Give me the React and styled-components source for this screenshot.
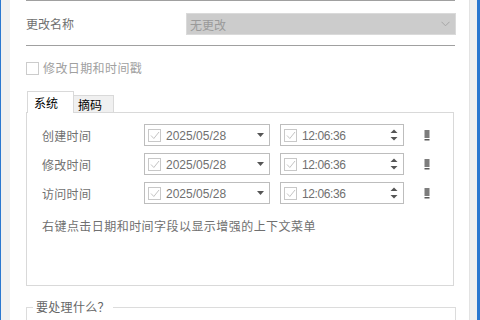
import React from "react";
import styled, { createGlobalStyle } from "styled-components";

const Global = createGlobalStyle`
  html, body { margin: 0; padding: 0; background: #ffffff; }
  body { font-family: "Noto Sans CJK SC", "Liberation Sans", sans-serif; font-size: 12px; }
  #root { width: 480px; height: 320px; overflow: hidden; }
`;

const Frame = styled.div`
  display: flex;
  width: 480px;
  height: 320px;
  overflow: hidden;
`;

const Edge = styled.div`
  flex: 0 0 ${(p) => p.$w}px;
  box-sizing: border-box;
  background: ${(p) => p.$c};
  border-left: ${(p) => (p.$bl ? `1px solid ${p.$bl}` : "none")};
`;

const Main = styled.div`
  flex: 1;
  background: #ffffff;
  padding: 0 13px 0 16px;
  display: flex;
  flex-direction: column;
  overflow: hidden;
`;

const Rule = styled.div`
  height: 1px;
  background: #a0a0a0;
  margin-top: ${(p) => p.$mt || 0}px;
  margin-right: 1px;
  flex-shrink: 0;
`;

const NameRow = styled.div`
  display: flex;
  align-items: center;
  margin-top: 12px;
  height: 22px;
  flex-shrink: 0;
`;

const NameLabel = styled.div`
  width: 160px;
  color: #707070;
  font-size: 12px;
  line-height: 16px;
`;

const Combo = styled.div`
  flex: 1;
  height: 20px;
  border: 1px solid #dadada;
  background: #cccccc;
  display: flex;
  align-items: center;
  justify-content: space-between;
  padding: 0 5px 0 3px;
  color: #9a9a9a;
  font-size: 12px;
`;

const CheckRow = styled.div`
  display: flex;
  align-items: center;
  margin-top: 15px;
  height: 14px;
  flex-shrink: 0;
`;

const Box = styled.div`
  width: 11px;
  height: 11px;
  border: 1px solid ${(p) => p.$border || "#cccccc"};
  background: #ffffff;
  margin-right: ${(p) => p.$mr || 4}px;
  flex-shrink: 0;
  display: flex;
  align-items: center;
  justify-content: center;
`;

const CheckText = styled.div`
  color: #a0a0a0;
  font-size: 12px;
  letter-spacing: 0.4px;
  line-height: 16px;
`;

const Tabs = styled.div`
  margin-top: 16px;
  display: flex;
  flex-direction: column;
  margin-right: 2px;
  flex-shrink: 0;
`;

const TabBar = styled.div`
  display: flex;
  align-items: flex-end;
  height: 22px;
  padding-left: 1px;
  position: relative;
  z-index: 1;
`;

const Tab = styled.div`
  height: ${(p) => (p.$active ? 22 : 18)}px;
  width: ${(p) => p.$w}px;
  box-sizing: border-box;
  border: 1px solid #d9d9d9;
  border-bottom: ${(p) => (p.$active ? "none" : "1px solid #d9d9d9")};
  border-left: ${(p) => (p.$noLeft ? "none" : "1px solid #d9d9d9")};
  background: ${(p) => (p.$active ? "#ffffff" : "#f0f0f0")};
  color: #000000;
  font-size: 12px;
  display: flex;
  align-items: center;
  padding-left: ${(p) => p.$pl}px;
  padding-top: ${(p) => (p.$active ? 0 : 1)}px;
`;

const Panel = styled.div`
  margin-top: -1px;
  height: 174px;
  box-sizing: border-box;
  border: 1px solid #d9d9d9;
  background: #ffffff;
  padding: 11px 0 0 15px;
  display: flex;
  flex-direction: column;
  gap: 7px;
`;

const TimeRow = styled.div`
  display: flex;
  align-items: center;
  height: 22px;
`;

const RowLabel = styled.div`
  width: 102px;
  color: #707070;
  font-size: 12px;
  letter-spacing: 0.3px;
`;

const Picker = styled.div`
  width: ${(p) => p.$w}px;
  height: 22px;
  box-sizing: border-box;
  border: 1px solid #bdbdbd;
  background: #ffffff;
  display: flex;
  align-items: center;
  padding: 0 0 0 3px;
  margin-right: ${(p) => p.$mr}px;
`;

const PickerText = styled.div`
  flex: 1;
  font-family: "Liberation Sans", Arial, sans-serif;
  font-size: 12px;
  color: #707070;
  letter-spacing: ${(p) => p.$ls || 0}px;
  margin-top: 1px;
`;

const Addon = styled.div`
  width: ${(p) => p.$w}px;
  display: flex;
  justify-content: center;
  align-items: center;
`;

const Hint = styled.div`
  margin-top: 7px;
  color: #707070;
  font-size: 12px;
  letter-spacing: 0.45px;
  line-height: 16px;
`;

const Group = styled.fieldset`
  margin: 13px 0 0 0;
  padding: 0;
  border: 1px solid #dcdcdc;
  height: 40px;
  flex-shrink: 0;
`;

const Legend = styled.legend`
  margin-left: 6px;
  padding: 0 3px;
  color: #666666;
  font-size: 12px;
  line-height: 16px;
  letter-spacing: 0.3px;
`;

const Check = () => (
  <svg width="10" height="9" viewBox="0 0 10 9">
    <path d="M1 4.5 L3.8 7.5 L9 1" fill="none" stroke="#c4c4c4" strokeWidth="1" />
  </svg>
);

const Chevron = () => (
  <svg width="9" height="6" viewBox="0 0 9 6">
    <path d="M0.5 0.8 L4.5 4.8 L8.5 0.8" fill="none" stroke="#a6a6a6" strokeWidth="1" />
  </svg>
);

const DownTri = () => (
  <svg width="7" height="4" viewBox="0 0 7 4">
    <path d="M0 0 L7 0 L3.5 4 Z" fill="#555555" />
  </svg>
);

const Spin = () => (
  <svg width="8" height="14" viewBox="0 0 8 14">
    <path d="M0.5 5 L7.5 5 L4 1.5 Z" fill="#555555" />
    <path d="M0.5 9 L7.5 9 L4 12.5 Z" fill="#555555" />
  </svg>
);

const Marker = () => (
  <svg width="6" height="11" viewBox="0 0 6 11">
    <rect x="0.5" y="0" width="5" height="8" fill="#7d7d7d" />
    <rect x="0.5" y="9" width="5" height="1.5" fill="#5a5a5a" />
  </svg>
);

const MarkerWrap = styled.div`
  margin-left: 20px;
  display: flex;
  align-items: center;
  margin-top: 1px;
`;

const rows = ["创建时间", "修改时间", "访问时间"];

export default function App() {
  return (
    <>
      <Global />
      <Frame>
        <Edge $w={1} $c="#2b78d0" />
        <Edge $w={9} $c="#f0f0f0" />
        <Main>
          <Rule />
          <NameRow>
            <NameLabel>更改名称</NameLabel>
            <Combo>
              <span>无更改</span>
              <Chevron />
            </Combo>
          </NameRow>
          <Rule $mt={10} />
          <CheckRow>
            <Box $border="#cccccc" />
            <CheckText>修改日期和时间戳</CheckText>
          </CheckRow>
          <Tabs>
            <TabBar>
              <Tab $active $w={47} $pl={6}>系统</Tab>
              <Tab $w={40} $pl={4} $noLeft>摘码</Tab>
            </TabBar>
            <Panel>
              {rows.map((r) => (
                <TimeRow key={r}>
                  <RowLabel>{r}</RowLabel>
                  <Picker $w={126} $mr={10}>
                    <Box $border="#c8c8c8" $mr={5}>
                      <Check />
                    </Box>
                    <PickerText>2025/05/28</PickerText>
                    <Addon $w={18}>
                      <DownTri />
                    </Addon>
                  </Picker>
                  <Picker $w={124} $mr={0}>
                    <Box $border="#c8c8c8" $mr={5}>
                      <Check />
                    </Box>
                    <PickerText $ls={-0.4}>12:06:36</PickerText>
                    <Addon $w={18}>
                      <Spin />
                    </Addon>
                  </Picker>
                  <MarkerWrap>
                    <Marker />
                  </MarkerWrap>
                </TimeRow>
              ))}
              <Hint>右键点击日期和时间字段以显示增强的上下文菜单</Hint>
            </Panel>
          </Tabs>
          <Group>
            <Legend>要处理什么？</Legend>
          </Group>
        </Main>
        <Edge $w={8} $c="#f0f0f0" $bl="#e3e3e3" />
        <Edge $w={3} $c="#2b78d0" />
      </Frame>
    </>
  );
}
